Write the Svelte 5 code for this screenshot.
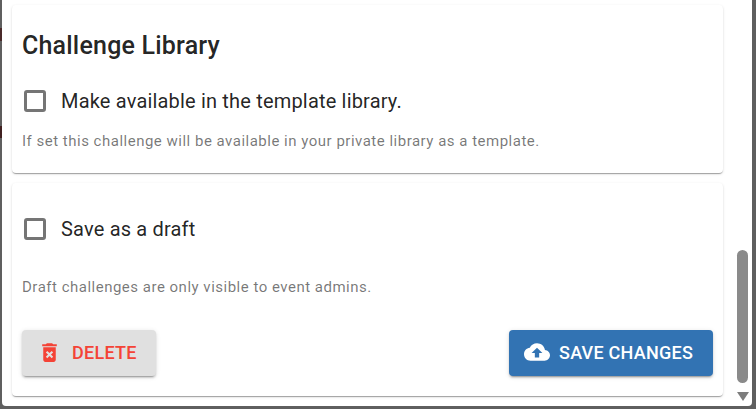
<script>
	const DELETE_ICON = 'M6 19c0 1.1.9 2 2 2h8c1.1 0 2-.9 2-2V7H6v12zm2.46-7.12 1.41-1.41L12 12.59l2.12-2.12 1.41 1.41L13.41 14l2.12 2.12-1.41 1.41L12 15.41l-2.12 2.12-1.41-1.41L10.59 14l-2.13-2.12zM15.5 4l-1-1h-5l-1 1H5v2h14V4z';
	const UPLOAD_ICON = 'M19.35 10.04C18.67 6.59 15.64 4 12 4 9.11 4 6.6 5.64 5.35 8.04 2.34 8.36 0 10.91 0 14c0 3.31 2.69 6 6 6h13c2.76 0 5-2.24 5-5 0-2.64-2.05-4.78-4.65-4.96zM14 13v4h-4v-4H7l5-5 5 5h-3z';
</script>

<div class="backdrop">
	<div class="dialog">
		<div class="content">
			<section class="card library">
				<h2>Challenge Library</h2>
				<label class="check">
					<span class="box"></span>
					<span>Make available in the template library.</span>
				</label>
				<p class="help">If set this challenge will be available in your private library as a template.</p>
			</section>
			<section class="card draft">
				<label class="check">
					<span class="box"></span>
					<span>Save as a draft</span>
				</label>
				<p class="help">Draft challenges are only visible to event admins.</p>
				<div class="actions">
					<button class="btn delete">
						<svg viewBox="0 0 24 24" width="25" height="25"><path d={DELETE_ICON} fill="currentColor" /></svg>
						Delete
					</button>
					<button class="btn save">
						<svg viewBox="0 0 24 24" width="26" height="26"><path d={UPLOAD_ICON} fill="currentColor" /></svg>
						Save changes
					</button>
				</div>
			</section>
		</div>
		<div class="scrollbar">
			<div class="track"><div class="thumb"></div></div>
			<div class="arrow"></div>
		</div>
	</div>
</div>

<style>
	:global(body) {
		margin: 0;
		background: #666;
	}

	.backdrop {
		width: 756px;
		height: 409px;
		box-sizing: border-box;
		padding: 0 4px 3px 2px;
		background:
			linear-gradient(#5f5f5f 28px, #4a2a2a 28px, #4a2a2a 41px, #5f5f5f 41px, #5f5f5f 126px, #402020 126px, #402020 138px, #5f5f5f 138px) no-repeat 0 0 / 2px 100%,
			#5f5f5f;
		font-family: Roboto, "Liberation Sans", sans-serif;
		overflow: hidden;
	}

	.dialog {
		display: flex;
		height: 100%;
		background: #fff;
		border-radius: 0 0 4px 4px;
	}

	.content {
		width: 721px;
		padding: 5px 0 0 10px;
		box-sizing: border-box;
		display: flex;
		flex-direction: column;
		gap: 10px;
	}

	.card {
		box-sizing: border-box;
		background: #fff;
		border-radius: 4px;
		padding: 0 10px;
		box-shadow: 0 2px 1px -1px rgba(0, 0, 0, 0.2), 0 1px 1px 0 rgba(0, 0, 0, 0.14), 0 1px 3px 0 rgba(0, 0, 0, 0.12);
	}

	.library {
		height: 168px;
		padding-top: 26px;
	}

	.draft {
		height: 213px;
		padding-top: 28px;
	}

	h2 {
		margin: 0 0 22px;
		font-size: 25px;
		line-height: 30px;
		font-weight: 500;
		letter-spacing: 0.2px;
		color: rgba(0, 0, 0, 0.87);
	}

	.check {
		display: flex;
		align-items: center;
		gap: 15px;
		height: 36px;
		padding-left: 2px;
		font-size: 20px;
		letter-spacing: 0.18px;
		color: rgba(0, 0, 0, 0.87);
	}

	.box {
		width: 16px;
		height: 16px;
		border: 3px solid #757575;
		border-radius: 3px;
		flex: none;
	}

	.help {
		margin: 12px 0 0;
		font-size: 15px;
		line-height: 20px;
		letter-spacing: 0.5px;
		color: rgba(0, 0, 0, 0.54);
	}

	.draft .help {
		margin-top: 30px;
	}

	.actions {
		display: flex;
		justify-content: space-between;
		margin-top: 33px;
	}

	.btn {
		display: flex;
		align-items: center;
		height: 46px;
		border: 0;
		border-radius: 4px;
		font-family: inherit;
		font-size: 18px;
		font-weight: 500;
		letter-spacing: 0.25px;
		text-transform: uppercase;
		box-shadow: 0 3px 1px -2px rgba(0, 0, 0, 0.2), 0 2px 2px 0 rgba(0, 0, 0, 0.14), 0 1px 5px 0 rgba(0, 0, 0, 0.12);
	}

	.delete {
		width: 134px;
		padding: 0 0 2px 15px;
		gap: 10px;
		background: #e0e0e0;
		color: #f44336;
	}

	.save {
		width: 204px;
		padding: 0 0 2px 15px;
		gap: 9px;
		background: #3273b3;
		color: #fff;
	}

	.scrollbar {
		display: flex;
		flex-direction: column;
		align-items: center;
		width: 13px;
		margin-left: 13px;
		padding-bottom: 5px;
	}

	.track {
		flex: 1;
		display: flex;
		flex-direction: column;
		justify-content: flex-end;
	}

	.thumb {
		width: 11px;
		height: 133px;
		background: #8a8a8a;
		border-radius: 6px;
	}

	.arrow {
		margin-top: 9px;
		width: 0;
		height: 0;
		border-left: 6.5px solid transparent;
		border-right: 6.5px solid transparent;
		border-top: 9px solid #7d7d7d;
	}
</style>
